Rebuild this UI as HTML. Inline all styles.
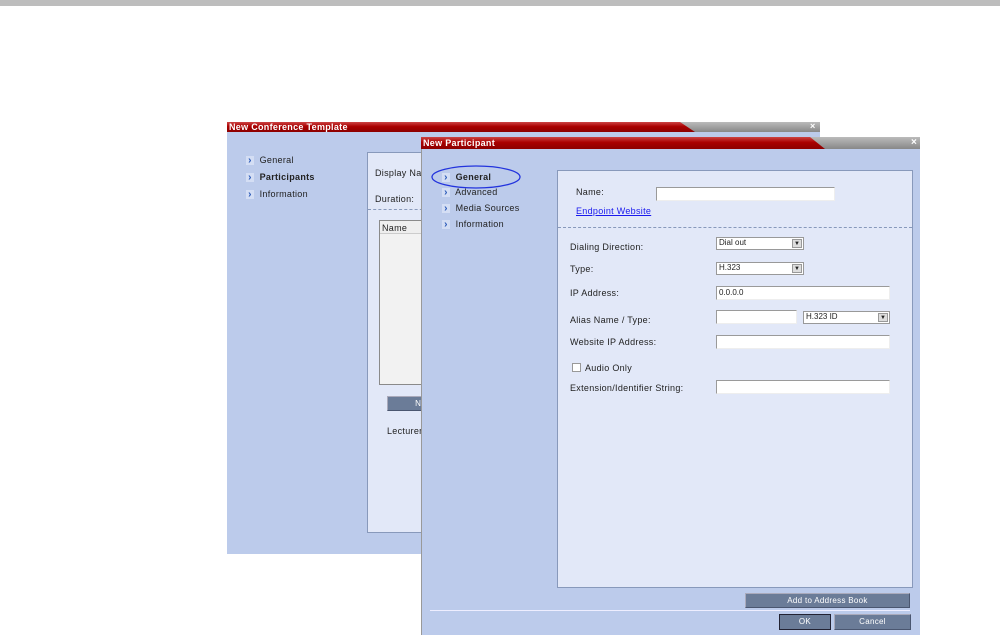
<!DOCTYPE html>
<html><head><style>
*{margin:0;padding:0;box-sizing:border-box}
body{width:1000px;height:635px;background:#fff;position:relative;overflow:hidden;font-family:"Liberation Sans",sans-serif;font-size:9px;color:#222;letter-spacing:0.3px}
.a{position:absolute}
.tb{background:linear-gradient(#c44 0%,#a00 45%,#8c0000 100%);color:#fff;font-weight:bold;font-size:9px;padding-left:2px;line-height:11px}
.gr{background:linear-gradient(#bbb,#888)}
.inp{background:#fff;border:1px solid #9a9a9a;border-right-color:#eee;border-bottom-color:#eee}
.sel{background:#fff;border:1px solid #999;font-size:8px;padding-left:2px;line-height:10px;letter-spacing:0}
.sel i{position:absolute;right:1px;top:1px;width:10px;height:9px;background:#ddd;border:1px solid #999;font-style:normal;font-size:6px;text-align:center;line-height:8px}
.btn{background:#6b7c98;color:#fff;text-align:center;font-size:8px;border:1px solid #4a5670;border-top-color:#aab;border-left-color:#aab}
.arr{color:#2a5ab8;font-weight:bold;font-size:10px;display:inline-block;width:8px;background:#d4def4;text-align:center;line-height:9px}
</style></head><body>
<div class="a" style="left:0;top:0;width:1000px;height:6px;background:#bdbdbd"></div>

<!-- back window -->
<div class="a" style="left:227px;top:122px;width:593px;height:432px;background:#bccbeb"></div>
<div class="a tb" style="left:227px;top:122px;width:470px;height:10px;clip-path:polygon(0 0,455px 0,470px 100%,0 100%)">New Conference Template</div>
<div class="a gr" style="left:680px;top:122px;width:140px;height:10px;clip-path:polygon(0 0,100% 0,100% 100%,15px 100%)"></div>
<div class="a" style="left:810px;top:121px;color:#fff;font-weight:bold;font-size:9px">×</div>
<div class="a" style="left:246px;top:155px"><span class="arr">›</span>&nbsp; General</div>
<div class="a" style="left:246px;top:172px;font-weight:bold"><span class="arr">›</span>&nbsp; Participants</div>
<div class="a" style="left:246px;top:189px"><span class="arr">›</span>&nbsp; Information</div>
<div class="a" style="left:367px;top:152px;width:60px;height:381px;background:#e2e8f8;border:1px solid #8899bb"></div>
<div class="a" style="left:375px;top:168px">Display Na</div>
<div class="a" style="left:375px;top:194px">Duration:</div>
<div class="a" style="left:368px;top:209px;width:60px;border-top:1px dashed #8899bb"></div>
<div class="a" style="left:379px;top:220px;width:50px;height:165px;background:#f2f2f2;border:1px solid #8a8a8a"></div>
<div class="a" style="left:380px;top:221px;width:50px;height:13px;background:#eee;border-bottom:1px solid #ccc;padding:2px 0 0 2px">Name</div>
<div class="a btn" style="left:387px;top:396px;width:40px;height:15px;line-height:13px;text-align:right">Ne</div>
<div class="a" style="left:387px;top:426px">Lecturer</div>

<!-- front window -->
<div class="a" style="left:421px;top:137px;width:499px;height:498px;background:#bccbeb;border-left:1px solid #999"></div>
<div class="a tb" style="left:421px;top:137px;width:405px;height:12px;line-height:12px;clip-path:polygon(0 0,390px 0,405px 100%,0 100%)">New Participant</div>
<div class="a gr" style="left:810px;top:137px;width:110px;height:12px;clip-path:polygon(0 0,100% 0,100% 100%,15px 100%)"></div>
<div class="a" style="left:911px;top:137px;color:#fff;font-weight:bold;font-size:10px">×</div>
<div class="a" style="left:442px;top:172px;font-weight:bold"><span class="arr">›</span>&nbsp; General</div>
<div class="a" style="left:442px;top:187px"><span class="arr">›</span>&nbsp; Advanced</div>
<div class="a" style="left:442px;top:203px"><span class="arr">›</span>&nbsp; Media Sources</div>
<div class="a" style="left:442px;top:219px"><span class="arr">›</span>&nbsp; Information</div>
<svg class="a" style="left:430px;top:164px" width="94" height="26"><ellipse cx="46" cy="13" rx="44" ry="11" fill="none" stroke="#2233dd" stroke-width="1.3"/></svg>

<div class="a" style="left:557px;top:170px;width:356px;height:418px;background:#e2e8f8;border:1px solid #8899bb"></div>
<div class="a" style="left:576px;top:187px">Name:</div>
<div class="a inp" style="left:656px;top:187px;width:179px;height:14px"></div>
<div class="a" style="left:576px;top:206px;color:#1a1aee;text-decoration:underline">Endpoint Website</div>
<div class="a" style="left:558px;top:227px;width:354px;border-top:1px dashed #8899bb"></div>
<div class="a" style="left:570px;top:242px">Dialing Direction:</div>
<div class="a sel" style="left:716px;top:237px;width:88px;height:13px">Dial out<i>▼</i></div>
<div class="a" style="left:570px;top:264px">Type:</div>
<div class="a sel" style="left:716px;top:262px;width:88px;height:13px">H.323<i>▼</i></div>
<div class="a" style="left:570px;top:288px">IP Address:</div>
<div class="a inp" style="left:716px;top:286px;width:174px;height:14px;font-size:8px;padding-left:2px;line-height:12px;letter-spacing:0">0.0.0.0</div>
<div class="a" style="left:570px;top:315px">Alias Name / Type:</div>
<div class="a inp" style="left:716px;top:310px;width:81px;height:14px"></div>
<div class="a sel" style="left:803px;top:311px;width:87px;height:13px">H.323 ID<i>▼</i></div>
<div class="a" style="left:570px;top:337px">Website IP Address:</div>
<div class="a inp" style="left:716px;top:335px;width:174px;height:14px"></div>
<div class="a" style="left:572px;top:363px;width:9px;height:9px;background:#fff;border:1px solid #999"></div>
<div class="a" style="left:585px;top:363px">Audio Only</div>
<div class="a" style="left:570px;top:383px">Extension/Identifier String:</div>
<div class="a inp" style="left:716px;top:380px;width:174px;height:14px"></div>

<div class="a btn" style="left:745px;top:593px;width:165px;height:15px;line-height:13px">Add to Address Book</div>
<div class="a" style="left:430px;top:610px;width:480px;border-top:1px solid #eef"></div>
<div class="a btn" style="left:779px;top:614px;width:52px;height:16px;line-height:14px;border-color:#223">OK</div>
<div class="a btn" style="left:834px;top:614px;width:77px;height:16px;line-height:14px">Cancel</div>
</body></html>
